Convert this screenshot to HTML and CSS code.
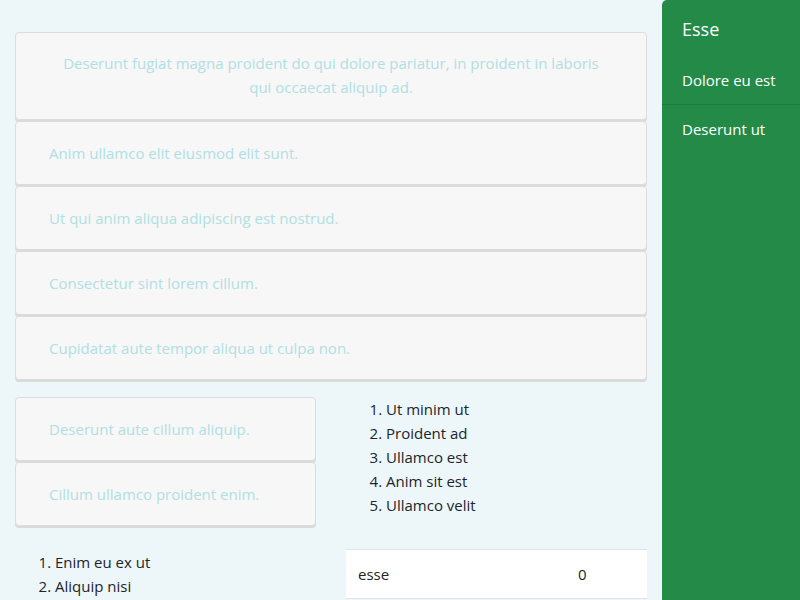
FILE: index.html
```html
<!DOCTYPE html>
<html>
<head>
<meta charset="utf-8">
<link rel="stylesheet" href="styles.css">
</head>
<body>
<div class="page">
  <main class="main">
    <div class="card-stack">
      <div class="card center">Deserunt fugiat magna proident do qui dolore pariatur, in proident in laboris qui occaecat aliquip ad.</div>
      <div class="card">Anim ullamco elit eiusmod elit sunt.</div>
      <div class="card">Ut qui anim aliqua adipiscing est nostrud.</div>
      <div class="card">Consectetur sint lorem cillum.</div>
      <div class="card">Cupidatat aute tempor aliqua ut culpa non.</div>
    </div>
    <div class="row row-mid">
      <div class="card-stack">
        <div class="card">Deserunt aute cillum aliquip.</div>
        <div class="card">Cillum ullamco proident enim.</div>
      </div>
      <ol class="list">
        <li>Ut minim ut</li>
        <li>Proident ad</li>
        <li>Ullamco est</li>
        <li>Anim sit est</li>
        <li>Ullamco velit</li>
      </ol>
    </div>
    <div class="row row-bottom">
      <ol class="list">
        <li>Enim eu ex ut</li>
        <li>Aliquip nisi</li>
      </ol>
      <table class="table">
        <tbody>
          <tr><td class="name">esse</td><td>0</td></tr>
        </tbody>
      </table>
    </div>
  </main>
  <aside class="sidebar">
    <div class="side-title">Esse</div>
    <div class="side-item first">Dolore eu est</div>
    <div class="side-item">Deserunt ut</div>
  </aside>
</div>
</body>
</html>
```

FILE: styles.css
```css
* { box-sizing: border-box; }
html, body {
  margin: 0;
  padding: 0;
  height: 100%;
  overflow: hidden;
}
body {
  background: #edf7f9;
  font-family: "Open Sans", "Noto Sans", sans-serif;
  font-size: 15px;
  line-height: 24px;
  color: #212529;
}
.page {
  display: flex;
  height: 600px;
}
.main {
  width: 662px;
  padding: 32px 15px 0 15px;
}
.card-stack {
  display: flex;
  flex-direction: column;
  gap: 1px;
}
.card {
  background: #f7f7f7;
  border: 1px solid #dcdcdc;
  border-radius: 4px;
  box-shadow: 0 2px 0 #dadada;
  padding: 19px 33px;
  color: #afe0e3;
}
.card.center {
  text-align: center;
  padding-top: 18px;
  padding-bottom: 20px;
  padding-left: 38px;
  padding-right: 38px;
}
.row {
  display: grid;
  grid-template-columns: 301px 301px;
  column-gap: 30px;
}
.row-mid { margin-top: 17px; }
.row-bottom { margin-top: 23px; }
.list {
  margin: 0;
  padding-left: 40px;
}
.row-bottom .list { margin-top: 1px; }
.table {
  width: 301px;
  border-collapse: collapse;
  background: #ffffff;
  align-self: start;
}
.table td {
  padding: 12px;
  border-top: 1px solid #dee2e6;
  border-bottom: 1px solid #dee2e6;
}
.table td.name { width: 220px; }
.sidebar {
  flex: 1;
  background: #248a48;
  border-top-left-radius: 5px;
  color: #ffffff;
}
.side-title {
  font-size: 18px;
  padding: 16px 20px 14px;
  line-height: 26px;
}
.side-item {
  padding: 12px 20px;
  line-height: 24px;
}
.side-item.first { border-bottom: 1px solid #1f7a3e; }
```
